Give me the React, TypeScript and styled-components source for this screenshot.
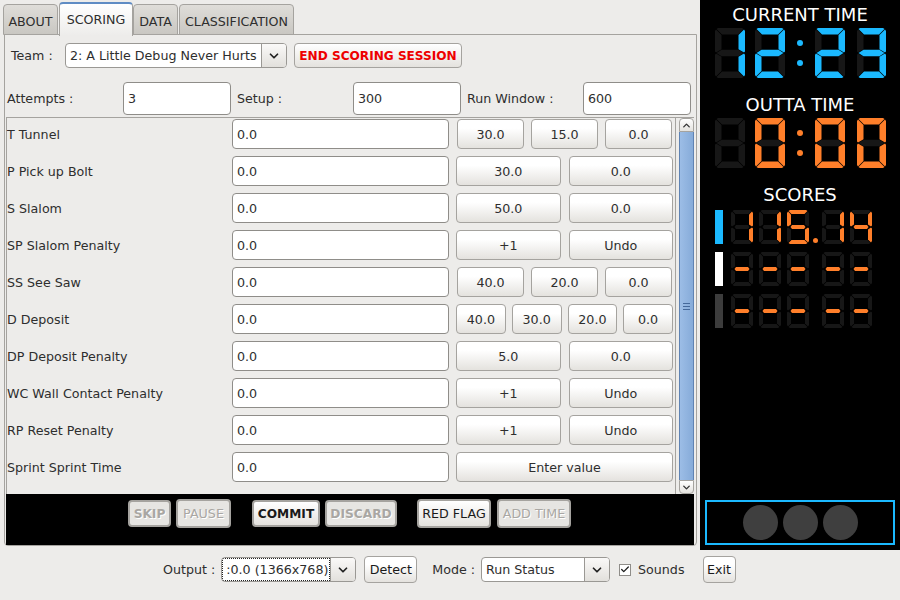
import React from 'react';
import styled, { createGlobalStyle } from 'styled-components';
import { Check, ChevronDown, ChevronUp } from 'lucide-react';

const BLUE = '#1bb9ff';
const ORANGE = '#ff7f2a';
const DIM = '#171717';

// Which segments are lit for each character: a b c d e f g
const SEGMENTS: Record<string, string> = {
  '0': 'abcdef',
  '1': 'bc',
  '2': 'abdeg',
  '3': 'abcdg',
  '4': 'bcfg',
  '5': 'acdfg',
  '-': 'g',
  ' ': '',
};

// Bars with clipped outer corners and a hairline gap where they meet
const segmentPoints = (w: number, h: number, t: number, tip: number) => {
  const g = 0.5;
  const m = h / 2;
  const half = t / 2;
  const R = w - t;
  const B = h - t;
  const shoulder = Math.max(t, tip + 1.5);
  return {
    a: `1.5,1 3,0 ${w - 3},0 ${w - 1.5},1 ${R - g},${t} ${t + g},${t}`,
    b: `${w},3 ${w - 1},1.5 ${R},${t + g} ${R},${m - half - g} ${w - 1},${m - g} ${w},${m - 1.5}`,
    c: `${w},${m + 1.5} ${w - 1},${m + g} ${R},${m + half + g} ${R},${B - g} ${w - 1},${h - 1.5} ${w},${h - 3}`,
    d: `1.5,${h - 1} 3,${h} ${w - 3},${h} ${w - 1.5},${h - 1} ${R - g},${B} ${t + g},${B}`,
    e: `0,${m + 1.5} 1,${m + g} ${t},${m + half + g} ${t},${B - g} 1,${h - 1.5} 0,${h - 3}`,
    f: `0,3 1,1.5 ${t},${t + g} ${t},${m - half - g} 1,${m - g} 0,${m - 1.5}`,
    g: `${tip},${m} ${shoulder},${m - half} ${w - shoulder},${m - half} ${w - tip},${m} ${w - shoulder},${m + half} ${shoulder},${m + half}`,
  };
};

interface DigitProps {
  char: string;
  color: string;
  w: number;
  h: number;
  t: number;
  tip?: number;
}

const Digit: React.FC<DigitProps> = ({ char, color, w, h, t, tip = 1.5 }) => {
  const points = segmentPoints(w, h, t, tip);
  const lit = SEGMENTS[char] ?? '';
  return (
    <svg width={w} height={h} viewBox={`0 0 ${w} ${h}`}>
      {(Object.keys(points) as (keyof typeof points)[]).map((key) => (
        <polygon key={key} points={points[key]} fill={lit.includes(key) ? color : DIM} />
      ))}
    </svg>
  );
};

const Clock: React.FC<{ value: string; color: string }> = ({ value, color }) => (
  <ClockRow>
    <Digit char={value[0]} color={color} w={30} h={50} t={6.5} />
    <Digit char={value[1]} color={color} w={30} h={50} t={6.5} />
    <Colon $color={color}>
      <i />
      <i />
    </Colon>
    <Digit char={value[3]} color={color} w={30} h={50} t={6.5} />
    <LastDigit>
      <Digit char={value[4]} color={color} w={29} h={50} t={6.5} />
    </LastDigit>
  </ClockRow>
);

const ScoreLine: React.FC<{ bar: string; value: string; dot?: boolean }> = ({ bar, value, dot }) => (
  <ScoreRow>
    <ScoreBar $color={bar} />
    <Digit char={value[0]} color={ORANGE} w={22} h={34} t={4} tip={3.5} />
    <Digit char={value[1]} color={ORANGE} w={22} h={34} t={4} tip={3.5} />
    <Digit char={value[2]} color={ORANGE} w={22} h={34} t={4} tip={3.5} />
    <DotSlot>
      {dot && <DecimalDot />}
    </DotSlot>
    <Digit char={value[3]} color={ORANGE} w={22} h={34} t={4} tip={3.5} />
    <Digit char={value[4]} color={ORANGE} w={22} h={34} t={4} tip={3.5} />
  </ScoreRow>
);

const rows: { label: string; buttons: string[] }[] = [
  { label: 'T Tunnel', buttons: ['30.0', '15.0', '0.0'] },
  { label: 'P Pick up Bolt', buttons: ['30.0', '0.0'] },
  { label: 'S Slalom', buttons: ['50.0', '0.0'] },
  { label: 'SP Slalom Penalty', buttons: ['+1', 'Undo'] },
  { label: 'SS See Saw', buttons: ['40.0', '20.0', '0.0'] },
  { label: 'D Deposit', buttons: ['40.0', '30.0', '20.0', '0.0'] },
  { label: 'DP Deposit Penalty', buttons: ['5.0', '0.0'] },
  { label: 'WC Wall Contact Penalty', buttons: ['+1', 'Undo'] },
  { label: 'RP Reset Penalty', buttons: ['+1', 'Undo'] },
  { label: 'Sprint Sprint Time', buttons: ['Enter value'] },
];

const GROUP_GAP: Record<number, number> = { 1: 0, 2: 8, 3: 7, 4: 6 };

const Combo: React.FC<{ width: number; value: string; focused?: boolean }> = ({ width, value, focused }) => (
  <ComboBox $width={width}>
    <ComboText $focused={focused}>{value}</ComboText>
    <ComboArrow>
      <ChevronDown size={14} strokeWidth={3} />
    </ComboArrow>
  </ComboBox>
);

const App: React.FC = () => (
  <Page>
    <GlobalStyle />
    <Main>
      <LeftColumn>
        <Tabs>
          <Tab $width={55}>ABOUT</Tab>
          <Tab $width={74} $active>SCORING</Tab>
          <Tab $width={45}>DATA</Tab>
          <Tab $width={115}>CLASSIFICATION</Tab>
        </Tabs>
        <Panel>
          <TeamRow>
            <TeamLabel>Team :</TeamLabel>
            <Combo width={222} value="2: A Little Debug Never Hurts" />
            <EndButton>END SCORING SESSION</EndButton>
          </TeamRow>
          <ParamsRow>
            <ParamLabel>Attempts :</ParamLabel>
            <ParamInput readOnly defaultValue="3" />
            <ParamLabel>Setup :</ParamLabel>
            <ParamInput readOnly defaultValue="300" />
            <ParamLabel>Run Window :</ParamLabel>
            <ParamInput readOnly defaultValue="600" />
          </ParamsRow>
          <ScoreList>
            <Rows>
              {rows.map((row) => (
                <Row key={row.label}>
                  <RowLabel>{row.label}</RowLabel>
                  <RowInput readOnly defaultValue="0.0" />
                  <ButtonGroup $gap={GROUP_GAP[row.buttons.length]} $inset={row.buttons.length === 3}>
                    {row.buttons.map((text, i) => (
                      <ValueButton key={i}>{text}</ValueButton>
                    ))}
                  </ButtonGroup>
                </Row>
              ))}
            </Rows>
            <Scrollbar>
              <ScrollArrow $top>
                <ChevronUp size={11} strokeWidth={3} />
              </ScrollArrow>
              <ScrollThumb>
                <Grip />
              </ScrollThumb>
              <ScrollArrow>
                <ChevronDown size={11} strokeWidth={3} />
              </ScrollArrow>
            </Scrollbar>
          </ScoreList>
          <ActionBar>
            <ActionButton $width={43} $bold disabled>SKIP</ActionButton>
            <ActionButton $width={55} $tall disabled>PAUSE</ActionButton>
            <ActionButton $width={68} $bold $spaced={16}>COMMIT</ActionButton>
            <ActionButton $width={72} $bold disabled>DISCARD</ActionButton>
            <ActionButton $width={74} $tall $spaced={15}>RED FLAG</ActionButton>
            <ActionButton $width={74} $tall $spaced={1} disabled>ADD TIME</ActionButton>
          </ActionBar>
        </Panel>
      </LeftColumn>
      <Scoreboard>
        <BoardTitle>CURRENT TIME</BoardTitle>
        <Clock value="12:23" color={BLUE} />
        <BoardTitle $top={17}>OUTTA TIME</BoardTitle>
        <Clock value=" 0:00" color={ORANGE} />
        <BoardTitle $top={17}>SCORES</BoardTitle>
        <ScoreLines>
          <ScoreLine bar={BLUE} value="11514" dot />
          <ScoreLine bar="#ffffff" value="-----" />
          <ScoreLine bar="#3c3c3c" value="-----" />
        </ScoreLines>
        <Lights>
          <Light />
          <Light />
          <Light />
        </Lights>
      </Scoreboard>
    </Main>
    <BottomBar>
      <BottomLabel>Output :</BottomLabel>
      <Combo width={135} value=":0.0 (1366x768)" focused />
      <SmallButton $left={8} $width={53}>Detect</SmallButton>
      <BottomLabel $left={15}>Mode :</BottomLabel>
      <Combo width={129} value="Run Status" />
      <CheckBox>
        <Check size={11} strokeWidth={3} />
      </CheckBox>
      <BottomLabel $left={7}>Sounds</BottomLabel>
      <SmallButton $left={12} $width={33}>Exit</SmallButton>
    </BottomBar>
  </Page>
);

export default App;

const GlobalStyle = createGlobalStyle`
  html, body {
    margin: 0;
    padding: 0;
    background: #edecea;
  }
  * {
    box-sizing: border-box;
  }
`;

const Page = styled.div`
  width: 900px;
  height: 600px;
  display: flex;
  flex-direction: column;
  background: #edecea;
  font-family: 'DejaVu Sans', sans-serif;
  font-size: 12.67px;
  color: #2e2e2e;
  overflow: hidden;
`;

const Main = styled.div`
  display: flex;
  height: 550px;
`;

const LeftColumn = styled.div`
  width: 700px;
  display: flex;
  flex-direction: column;
`;

const Tabs = styled.div`
  display: flex;
  align-items: flex-end;
  height: 35px;
  padding-left: 3px;
`;

const Tab = styled.div<{ $width: number; $active?: boolean }>`
  width: ${(p) => p.$width}px;
  height: ${(p) => (p.$active ? 34 : 31)}px;
  display: flex;
  align-items: center;
  justify-content: center;
  margin-right: ${(p) => (p.$active ? 0 : 1)}px;
  border: 1px solid #a5a39f;
  border-bottom: ${(p) => (p.$active ? 'none' : '1px solid #a5a39f')};
  border-top: ${(p) => (p.$active ? '2px solid #5f8cc4' : '1px solid #a5a39f')};
  border-radius: 4px 4px 0 0;
  padding-top: ${(p) => (p.$active ? 0 : 4)}px;
  padding-bottom: ${(p) => (p.$active ? 2 : 0)}px;
  background: ${(p) => (p.$active
    ? 'linear-gradient(#ffffff, #edecea)'
    : 'linear-gradient(#dfddd9, #c9c7c2)')};
  color: #2e2e2e;
  position: relative;
  z-index: ${(p) => (p.$active ? 1 : 0)};
  ${(p) => (p.$active ? 'margin-bottom: -1px;' : '')}
`;

const Panel = styled.div`
  width: 693px;
  height: 512px;
  margin-left: 4px;
  margin-top: -1px;
  border: 1px solid #a5a39f;
  border-radius: 0 0 4px 4px;
  padding: 0 2px 0 1px;
  display: flex;
  flex-direction: column;
`;

const TeamRow = styled.div`
  display: flex;
  align-items: center;
  height: 25px;
  margin-top: 8px;
  padding-left: 5px;
`;

const TeamLabel = styled.span`
  width: 54px;
`;

const ComboBox = styled.div<{ $width: number }>`
  width: ${(p) => p.$width}px;
  height: 25px;
  display: flex;
  border: 1px solid #9a9894;
  border-radius: 4px;
  overflow: hidden;
  background: #ffffff;
`;

const ComboText = styled.div<{ $focused?: boolean }>`
  flex: 1;
  display: flex;
  align-items: center;
  padding-left: 4px;
  white-space: nowrap;
  overflow: hidden;
  ${(p) => (p.$focused ? 'outline: 1px dotted #222; outline-offset: -1px;' : '')}
`;

const ComboArrow = styled.div`
  width: 25px;
  display: flex;
  align-items: center;
  justify-content: center;
  border-left: 1px solid #9a9894;
  background: linear-gradient(#faf9f8, #e2e0dc);
  color: #222;
`;

const EndButton = styled.button`
  width: 168px;
  height: 25px;
  margin-left: 7px;
  padding: 0;
  border: 1px solid #a5a39f;
  border-radius: 4px;
  background: linear-gradient(#ffffff, #e4e2de);
  color: #ee0000;
  font: bold 12.1px 'DejaVu Sans', sans-serif;
`;

const ParamsRow = styled.div`
  display: flex;
  align-items: center;
  height: 33px;
  margin-top: 14px;
  margin-bottom: 2px;
  padding-left: 1px;
`;

const ParamLabel = styled.span`
  width: 116px;
  &:not(:first-child) {
    margin-left: 6px;
  }
`;

const ParamInput = styled.input`
  width: 108px;
  height: 33px;
  border: 1px solid #8f8d89;
  border-radius: 4px;
  background: #ffffff;
  padding: 0 0 0 4px;
  font: 12.67px 'DejaVu Sans', sans-serif;
  color: #2e2e2e;
  outline: none;
`;

const ScoreList = styled.div`
  display: flex;
  height: 377px;
  border: 1px solid #a5a39f;
  border-bottom: none;
  border-right: none;
`;

const Rows = styled.div`
  width: 669px;
  padding-top: 1px;
  display: flex;
  flex-direction: column;
  gap: 7px;
`;

const Row = styled.div`
  display: flex;
  align-items: center;
  height: 30px;
`;

const RowLabel = styled.span`
  width: 225px;
`;

const RowInput = styled(ParamInput)`
  width: 217px;
  height: 30px;
`;

const ButtonGroup = styled.div<{ $gap: number; $inset?: boolean }>`
  width: 217px;
  height: 30px;
  margin-left: 7px;
  display: flex;
  gap: ${(p) => p.$gap}px;
  padding: 0 ${(p) => (p.$inset ? 1 : 0)}px;
`;

const ValueButton = styled.button`
  flex: 1;
  height: 30px;
  padding: 0;
  border: 1px solid #a5a39f;
  border-radius: 4px;
  background: linear-gradient(#ffffff 30%, #e4e2de);
  color: #2e2e2e;
  font: 12.67px 'DejaVu Sans', sans-serif;
`;

const Scrollbar = styled.div`
  width: 19px;
  margin-left: auto;
  display: flex;
  flex-direction: column;
  border-left: 1px solid #a5a39f;
  padding-left: 3px;
`;

const ScrollArrow = styled.div<{ $top?: boolean }>`
  height: 14px;
  display: flex;
  align-items: center;
  justify-content: center;
  border: 1px solid #a5a39f;
  border-radius: ${(p) => (p.$top ? '4px 4px 0 0' : '0 0 4px 4px')};
  background: linear-gradient(#ffffff, #e4e2de);
  color: #333;
`;

const ScrollThumb = styled.div`
  flex: 1;
  display: flex;
  align-items: center;
  justify-content: center;
  border-left: 1px solid #5f83b3;
  border-right: 1px solid #5f83b3;
  background: linear-gradient(90deg, #9cbde6, #86abd9);
`;

const Grip = styled.div`
  width: 7px;
  height: 7px;
  border-top: 1px solid #45699b;
  border-bottom: 1px solid #45699b;
  position: relative;
  &::after {
    content: '';
    position: absolute;
    left: 0;
    right: 0;
    top: 2px;
    height: 1px;
    background: #45699b;
  }
`;

const ActionBar = styled.div`
  height: 51px;
  background: #000000;
  display: flex;
  align-items: center;
  gap: 5px;
  padding: 0 0 12px 122px;
`;

const ActionButton = styled.button<{ $width: number; $bold?: boolean; $tall?: boolean; $spaced?: number }>`
  width: ${(p) => p.$width}px;
  height: ${(p) => (p.$tall ? 29 : 27)}px;
  padding: 0;
  margin-left: ${(p) => p.$spaced ?? 0}px;
  border: 2px solid #a5a39f;
  border-radius: 4px;
  background: linear-gradient(#ffffff, #e4e2de);
  color: #1a1a1a;
  font: ${(p) => (p.$bold ? 'bold 12.2px' : 'normal 12.67px')} 'DejaVu Sans', sans-serif;
  &:disabled {
    background: #e6e5e2;
    color: #a9a7a3;
    text-shadow: 1px 1px 0 #ffffff;
  }
`;

const Scoreboard = styled.div`
  width: 200px;
  background: #000000;
  display: flex;
  flex-direction: column;
  color: #ffffff;
`;

const BoardTitle = styled.div<{ $top?: number }>`
  text-align: center;
  font-size: 18px;
  line-height: 20px;
  margin-top: ${(p) => p.$top ?? 5}px;
  margin-bottom: 3px;
`;

const ClockRow = styled.div`
  display: flex;
  height: 50px;
  padding-left: 15px;
  gap: 10px;
`;

const Colon = styled.div<{ $color: string }>`
  width: 10px;
  display: flex;
  flex-direction: column;
  align-items: center;
  justify-content: center;
  gap: 14px;
  i {
    width: 6px;
    height: 6px;
    border-radius: 50%;
    background: ${(p) => p.$color};
  }
`;

const LastDigit = styled.div`
  margin-left: 2px;
`;

const ScoreLines = styled.div`
  display: flex;
  flex-direction: column;
  gap: 8px;
  margin-top: 2px;
`;

const ScoreRow = styled.div`
  display: flex;
  height: 34px;
  padding-left: 15px;
  gap: 6px;
`;

const ScoreBar = styled.div<{ $color: string }>`
  width: 8px;
  margin-right: 2px;
  background: ${(p) => p.$color};
`;

const DotSlot = styled.div`
  width: 1px;
  display: flex;
  align-items: flex-end;
  justify-content: center;
  padding-bottom: 1px;
`;

const DecimalDot = styled.div`
  flex-shrink: 0;
  width: 5px;
  height: 5px;
  border-radius: 50%;
  background: ${ORANGE};
`;

const Lights = styled.div`
  width: 190px;
  height: 45px;
  margin: auto 0 5px 5px;
  border: 2px solid ${BLUE};
  display: flex;
  align-items: center;
  justify-content: center;
  gap: 5px;
`;

const Light = styled.div`
  width: 35px;
  height: 35px;
  border-radius: 50%;
  background: #3f3f3f;
`;

const BottomBar = styled.div`
  height: 50px;
  display: flex;
  align-items: center;
  padding-left: 163px;
  padding-bottom: 11px;
`;

const BottomLabel = styled.span<{ $left?: number }>`
  margin-left: ${(p) => p.$left ?? 0}px;
  margin-right: 6px;
  white-space: nowrap;
`;

const SmallButton = styled.button<{ $left: number; $width: number }>`
  width: ${(p) => p.$width}px;
  height: 27px;
  margin-left: ${(p) => p.$left}px;
  padding: 0;
  border: 1px solid #a5a39f;
  border-radius: 4px;
  background: linear-gradient(#ffffff 30%, #e4e2de);
  color: #1a1a1a;
  font: 12.67px 'DejaVu Sans', sans-serif;
`;

const CheckBox = styled.div`
  width: 12px;
  height: 12px;
  margin-left: 9px;
  display: flex;
  align-items: center;
  justify-content: center;
  border: 1px solid #8f8d89;
  background: #ffffff;
  color: #1a1a1a;
`;
